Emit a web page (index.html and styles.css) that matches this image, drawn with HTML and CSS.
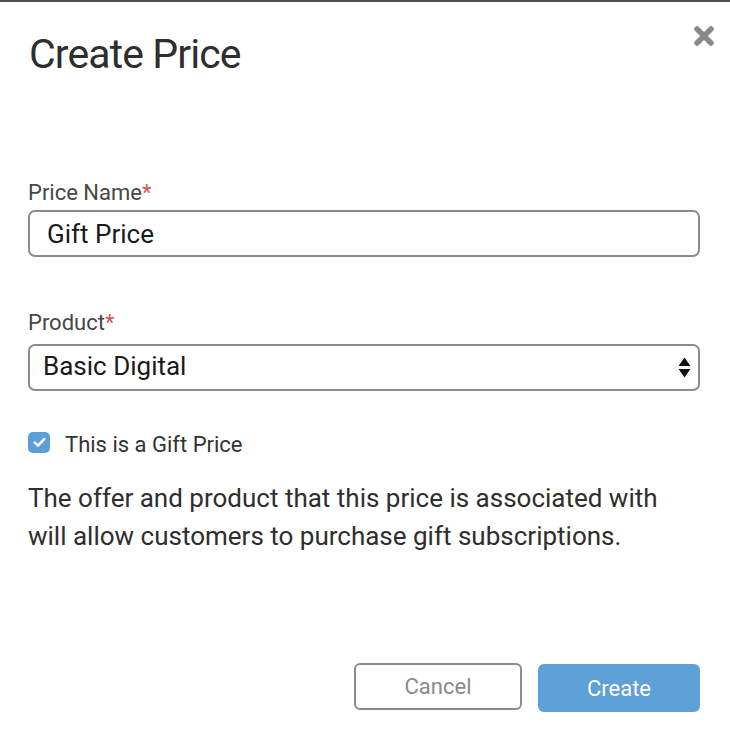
FILE: index.html
```html
<!DOCTYPE html>
<html>
<head>
<meta charset="utf-8">
<link rel="stylesheet" href="styles.css">
</head>
<body>
<div class="modal">
  <div class="header">
    <h1 class="title">Create Price</h1>
    <button class="close" aria-label="Close">
      <svg width="22" height="22" viewBox="0 0 22 22"><path d="M4 4 L18 18 M18 4 L4 18" stroke="#8a8a8a" stroke-width="5.5" stroke-linecap="round"/></svg>
    </button>
  </div>
  <div class="field field-name">
    <label class="label">Price Name<span class="req">*</span></label>
    <div class="input">Gift Price</div>
  </div>
  <div class="field field-product">
    <label class="label">Product<span class="req">*</span></label>
    <div class="select">
      <span>Basic Digital</span>
      <svg class="arrows" width="13" height="21" viewBox="0 0 13 21"><path d="M6.5 0.5 L12.5 9 L0.5 9 Z M0.5 12 L12.5 12 L6.5 20.5 Z" fill="#111"/></svg>
    </div>
  </div>
  <div class="check-row">
    <span class="checkbox">
      <svg width="13" height="11" viewBox="0 0 13 11"><path d="M1.8 5.6 L5 8.6 L11.2 2.2" fill="none" stroke="#fff" stroke-width="2.6" stroke-linecap="round" stroke-linejoin="round"/></svg>
    </span>
    <span class="check-label">This is a Gift Price</span>
  </div>
  <p class="desc">The offer and product that this price is associated with will allow customers to purchase gift subscriptions.</p>
  <div class="actions">
    <button class="btn btn-cancel">Cancel</button>
    <button class="btn btn-create">Create</button>
  </div>
</div>
</body>
</html>
```
FILE: styles.css
```css
html, body {
  margin: 0;
  padding: 0;
  background: #fff;
}
body {
  font-family: "Roboto", "Noto Sans", sans-serif;
  color: #333;
}
.modal {
  width: 730px;
  height: 744px;
  box-sizing: border-box;
  border-top: 2px solid #4a4d51;
  padding: 0 30px 32px 28px;
  display: flex;
  flex-direction: column;
}
.header {
  display: flex;
  justify-content: space-between;
  align-items: flex-start;
}
.title {
  margin: 28px 0 0 1px;
  font-size: 41px;
  font-weight: 400;
  line-height: 48px;
  color: #2e2e2e;
  letter-spacing: -0.9px;
}
.close {
  margin: 23px -15px 0 0;
  padding: 0;
  border: 0;
  background: none;
  width: 22px;
  height: 22px;
  display: block;
}
.close svg {
  display: block;
}
.field-name {
  margin-top: 101px;
}
.field-product {
  margin-top: 52px;
}
.label {
  display: block;
  font-size: 22px;
  line-height: 27px;
  color: #474747;
  margin-bottom: 4px;
}
.field-product .label {
  margin-bottom: 8px;
}
.req {
  color: #d9534f;
}
.input, .select {
  height: 47px;
  box-sizing: border-box;
  border: 2px solid #8c8c8c;
  border-radius: 7px;
  font-size: 26px;
  color: #1a1a1a;
  display: flex;
  align-items: center;
}
.input {
  padding-left: 17px;
}
.select {
  padding: 0 7px 4px 13px;
  justify-content: space-between;
}
.arrows {
  margin-top: 4px;
}
.check-row {
  display: flex;
  align-items: flex-start;
  margin-top: 41px;
}
.checkbox {
  width: 22px;
  height: 21px;
  border-radius: 5px;
  background: #5b9fd8;
  display: flex;
  align-items: center;
  justify-content: center;
}
.check-label {
  margin-left: 15px;
  padding-top: 2px;
  font-size: 22px;
  line-height: 21px;
  color: #333;
}
.desc {
  margin: 24px 0 0 0;
  font-size: 26px;
  line-height: 38px;
  color: #2e2e2e;
  padding-right: 8px;
}
.actions {
  margin-top: auto;
  align-self: flex-end;
  display: flex;
  gap: 16px;
  align-items: flex-start;
}
.btn {
  font-family: "Roboto", "Noto Sans", sans-serif;
  font-size: 22px;
  border-radius: 6px;
  box-sizing: border-box;
  padding: 0;
}
.btn-cancel {
  width: 168px;
  height: 47px;
  background: #fff;
  border: 2px solid #8c8c8c;
  color: #8a8a8a;
}
.btn-create {
  width: 162px;
  height: 48px;
  background: #5ea1d8;
  border: 0;
  color: #fff;
  margin-top: 1px;
}
```
